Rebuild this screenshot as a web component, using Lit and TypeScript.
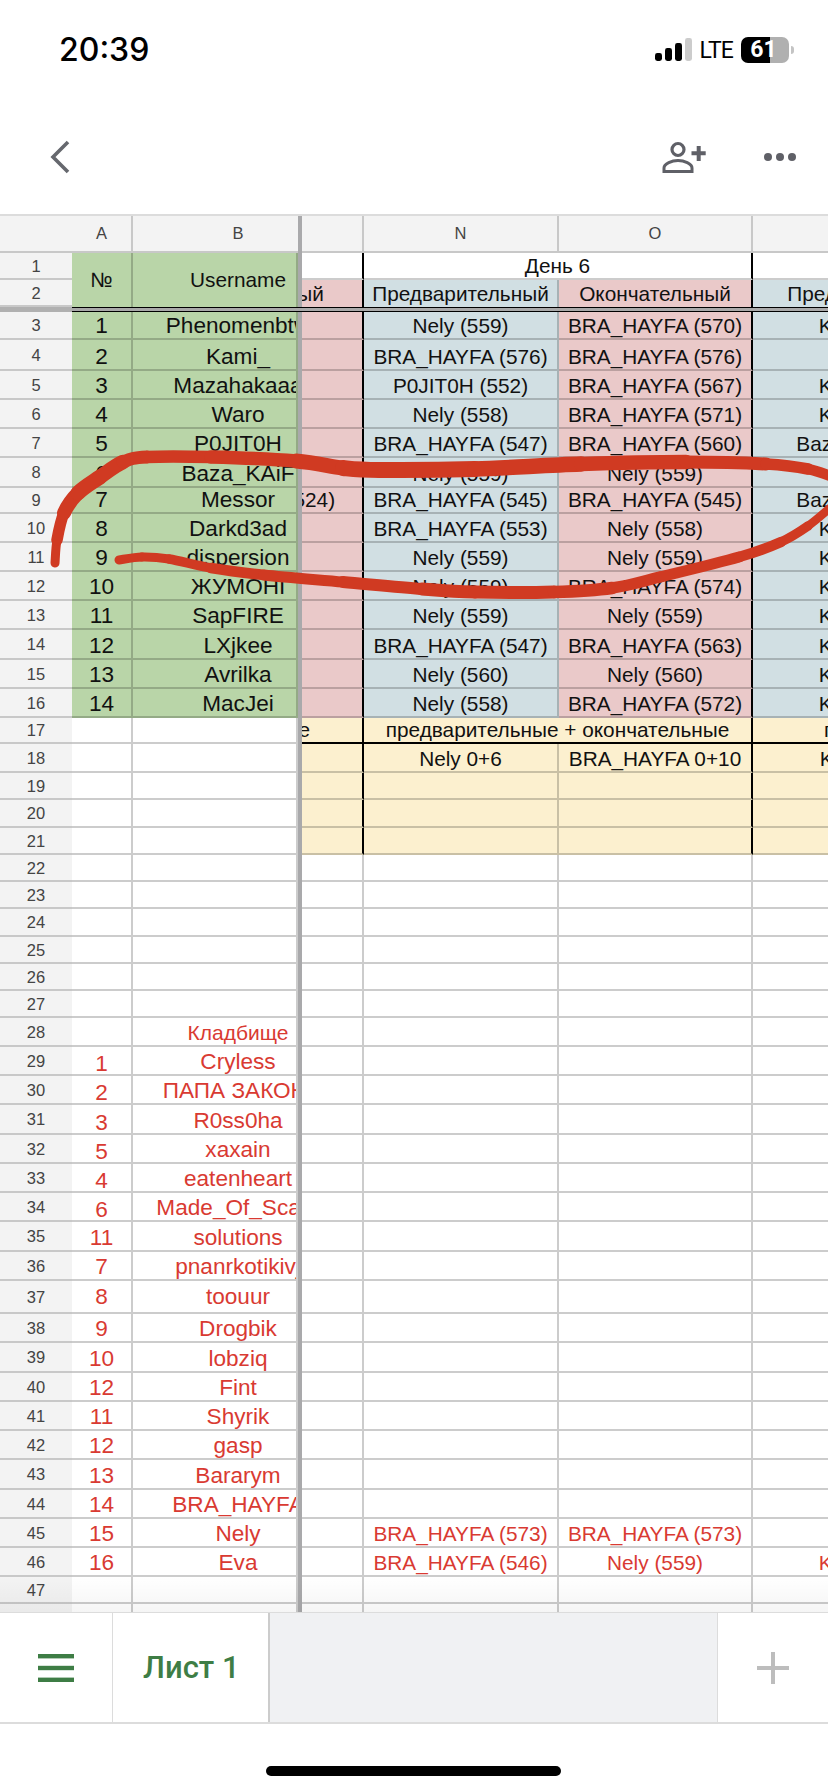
import {css, html, LitElement, svg} from 'lit';
import {customElement} from 'lit/decorators.js';

type Theme = 'player' | 'sum' | 'plain';

interface Row {
  num: number;
  theme: Theme;
  a?: string;
  b?: string;
  m?: string;
  n?: string;
  o?: string;
  p?: string;
}

// bottom edge of each sheet row in page pixels, rows 3 to 48
const ROW_ENDS = [
  340, 371, 400, 429, 458, 488, 514, 543, 572, 601, 630, 660, 689, 718, 744,
  773, 800, 828, 855, 882, 909, 937, 964, 991, 1018, 1047, 1076, 1105, 1135,
  1164, 1193, 1222, 1252, 1281, 1314, 1343, 1373, 1402, 1431, 1460, 1490, 1519,
  1548, 1577, 1604, 1634,
];

const bra = (score: number) => `BRA_HAYFA (${score})`;
const nely = (score: number) => `Nely (${score})`;
const KAMI = 'Kami_ (560)';
const BAZA = 'Baza_KAiF (560)';
const TOTALS = 'предварительные + окончательные';

const PLAYERS: [string, string, string, string][] = [
  ['Phenomenbtw', nely(559), bra(570), KAMI],
  ['Kami_', bra(576), bra(576), ''],
  ['Mazahakaaa', 'P0JIT0H (552)', bra(567), KAMI],
  ['Waro', nely(558), bra(571), KAMI],
  ['P0JIT0H', bra(547), bra(560), BAZA],
  ['Baza_KAiF', nely(559), nely(559), ''],
  ['Messor', bra(545), bra(545), BAZA],
  ['Darkd3ad', bra(553), nely(558), KAMI],
  ['dispersion', nely(559), nely(559), KAMI],
  ['ЖУМОНI', nely(559), bra(574), KAMI],
  ['SapFIRE', nely(559), nely(559), KAMI],
  ['LXjkee', bra(547), bra(563), KAMI],
  ['Avrilka', nely(560), nely(560), KAMI],
  ['MacJei', nely(558), bra(572), KAMI],
];

const GRAVE: [string, string][] = [
  ['1', 'Cryless'],
  ['2', 'ПАПА ЗАКОН\u00a0'],
  ['3', 'R0ss0ha'],
  ['5', 'xaxain'],
  ['4', 'eatenheart'],
  ['6', 'Made_Of_Scars'],
  ['11', 'solutions'],
  ['7', 'pnanrkotikivj'],
  ['8', 'toouur'],
  ['9', 'Drogbik'],
  ['10', 'lobziq'],
  ['12', 'Fint'],
  ['11', 'Shyrik'],
  ['12', 'gasp'],
  ['13', 'Bararym'],
  ['14', 'BRA_HAYFA'],
  ['15', 'Nely'],
  ['16', 'Eva'],
];

function buildRows(): Row[] {
  const rows: Row[] = [];
  for (let num = 3; num <= 48; num++) {
    if (num <= 16) {
      const [b, n, o, p] = PLAYERS[num - 3];
      rows.push({num, theme: 'player', a: String(num - 2), b, n, o, p, m: num === 9 ? bra(524) : ''});
    } else if (num <= 21) {
      const row: Row = {num, theme: 'sum'};
      if (num === 18) Object.assign(row, {n: 'Nely 0+6', o: 'BRA_HAYFA 0+10', p: 'Kami_ 0+12'});
      rows.push(row);
    } else if (num >= 29 && num <= 46) {
      const [a, b] = GRAVE[num - 29];
      rows.push({num, theme: 'plain', a, b});
    } else {
      rows.push({num, theme: 'plain', b: num === 28 ? 'Кладбище' : ''});
    }
  }
  Object.assign(rows[45 - 3], {n: bra(573), o: bra(573)});
  Object.assign(rows[46 - 3], {n: bra(546), o: nely(559), p: KAMI});
  return rows;
}

// marker strokes: x, y, width
const UPPER_STROKE = [
  [55, 563, 8], [57, 540, 10], [64, 513, 13], [78, 493, 15], [100, 477, 15],
  [123, 462, 14], [147, 457, 12], [211, 457, 13], [296, 461, 14], [343, 468, 16],
  [380, 470, 16], [475, 469, 16], [581, 464, 15], [686, 462, 14], [766, 464, 12],
  [808, 469, 11], [836, 478, 10],
];
const LOWER_STROKE = [
  [119, 560, 9], [142, 557, 9], [169, 559, 9], [211, 568, 10], [264, 575, 11],
  [343, 582, 11], [422, 589, 13], [475, 592, 13], [554, 592, 13], [612, 588, 12],
  [660, 577, 11], [739, 557, 11], [781, 542, 10], [808, 526, 9], [830, 508, 8],
];

function strokeSegments(points: number[][]) {
  const out = [];
  const at = (i: number) => points[Math.max(0, Math.min(points.length - 1, i))];
  for (let i = 0; i < points.length - 1; i++) {
    const [p0, p1, p2, p3] = [at(i - 1), at(i), at(i + 1), at(i + 2)];
    const c1x = p1[0] + (p2[0] - p0[0]) / 6;
    const c1y = p1[1] + (p2[1] - p0[1]) / 6;
    const c2x = p2[0] - (p3[0] - p1[0]) / 6;
    const c2y = p2[1] - (p3[1] - p1[1]) / 6;
    out.push(svg`<path d="M${p1[0]} ${p1[1]}C${c1x} ${c1y} ${c2x} ${c2y} ${p2[0]} ${p2[1]}" stroke-width=${(p1[2] + p2[2]) / 2} />`);
  }
  return out;
}

@customElement('app-root')
export class AppRoot extends LitElement {
  private rows = buildRows();

  private cell(text: string | undefined, cls: string) {
    return html`<div class="c ${cls}"><span>${text ?? ''}</span></div>`;
  }

  private clipped(text: string | undefined, cls: string, box: string) {
    return html`<div class="c ${cls}"><span class=${box}>${text ?? ''}</span></div>`;
  }

  private renderRow(r: Row) {
    const red = r.num >= 28 ? 'red' : '';
    const edge = r.num <= 21 ? 'edge' : '';
    const low = r.num >= 29 && r.num <= 34 ? 'low' : '';
    const mid = r.num === 37 ? 'mid' : '';
    const tone = (player: string) =>
      r.theme === 'player' ? player : r.theme === 'sum' ? 'yellow' : '';
    const side = r.theme === 'player' ? 'green' : '';
    return html`
      <div class="rh">${r.num}</div>
      ${this.cell(r.a, `big ${side} ${red} ${low} ${mid}`)}
      ${this.clipped(r.b, `big name-cell ${side} ${red} ${mid} ${r.num === 28 ? 'small' : ''}`, 'name')}
      <div class="freeze-bar"></div>
      ${r.num === 17
        ? html`
            ${this.clipped(TOTALS, 'yellow edge rule end', 'm-total')}
            <div class="c wide yellow edge rule"><span>${TOTALS}</span></div>
            ${this.clipped(TOTALS, 'yellow rule start', 'p-total')}
          `
        : html`
            ${this.clipped(r.m, `${tone('pink')} ${edge}`, 'm-text')}
            ${this.cell(r.n, `${tone('blue')} ${red} ${mid}`)}
            ${this.cell(r.o, `${tone('pink')} ${edge} ${red} ${mid}`)}
            ${this.clipped(r.p, `${tone('blue')} ${red}`, 'p-text')}
          `}
    `;
  }

  override render() {
    const heights = ROW_ENDS.map((end, i) => end - (i === 0 ? 312 : ROW_ENDS[i - 1]));
    const template = `37px 27px 27px 5px ${heights.map((h) => `${h}px`).join(' ')}`;
    return html`
      <header class="status">
        <div class="time">20:39</div>
        <div class="status-right">
          <svg class="signal" width="37" height="23" viewBox="0 0 37 23">
            <rect x="0" y="15" width="7" height="8" rx="2.4" fill="#000" />
            <rect x="10" y="10" width="7" height="13" rx="2.4" fill="#000" />
            <rect x="20" y="5" width="7" height="18" rx="2.4" fill="#000" />
            <rect x="30" y="0" width="7" height="23" rx="2.4" fill="#ccc" />
          </svg>
          <span class="lte">LTE</span>
          <div class="battery">61</div>
          <div class="nub"></div>
        </div>
      </header>

      <nav class="toolbar">
        <svg width="20" height="34" viewBox="0 0 20 34" fill="none" stroke="#66686e" stroke-width="3.6">
          <polyline points="18,2 3,17 18,32" />
        </svg>
        <div class="spacer"></div>
        <svg width="44" height="32" viewBox="0 0 44 32" fill="none" stroke="#5f6067">
          <circle cx="16" cy="8.5" r="6" stroke-width="3.2" />
          <path d="M2 30.5V27C2 22.5 10 19.5 16 19.5S30 22.5 30 27V30.5Z" stroke-width="3" />
          <path d="M29.5 12.3H43.7M36.7 5V20" stroke-width="4" />
        </svg>
        <svg class="dots" width="32" height="8" viewBox="0 0 32 8" fill="#5f6067">
          <circle cx="4" cy="4" r="4" />
          <circle cx="16" cy="4" r="4" />
          <circle cx="28" cy="4" r="4" />
        </svg>
      </nav>

      <section class="sheet">
        <div class="grid" style="grid-template-rows:${template}">
          <div class="rh col-corner"></div>
          <div class="ch">A</div>
          <div class="ch name-head"><span class="name">B</span></div>
          <div class="freeze-bar"></div>
          <div class="ch"></div>
          <div class="ch">N</div>
          <div class="ch">O</div>
          <div class="ch"></div>

          <div class="rh">1</div>
          <div class="c big green merged"><span class="normal">№</span></div>
          <div class="c big green merged name-cell"><span class="name normal">Username</span></div>
          <div class="freeze-bar"></div>
          ${this.cell('', 'edge')}
          <div class="c wide edge"><span>День 6</span></div>
          ${this.cell('', '')}

          <div class="rh">2</div>
          <div class="freeze-bar"></div>
          ${this.clipped('Окончательный', 'pink edge flat', 'm-text')}
          ${this.cell('Предварительный', 'blue flat')}
          ${this.cell('Окончательный', 'pink edge flat')}
          ${this.clipped('Предварительный', 'blue flat', 'p-text')}

          <div class="freeze-head"></div>
          <div class="freeze-line"></div>

          ${this.rows.map((r) => this.renderRow(r))}
        </div>
        <div class="fade"></div>
      </section>

      <footer class="tabs">
        <div class="tab-menu">
          <svg width="36" height="28" viewBox="0 0 36 28" fill="#3e7d45">
            <rect y="0" width="36" height="4.4" />
            <rect y="11.8" width="36" height="4.4" />
            <rect y="23.6" width="36" height="4.4" />
          </svg>
        </div>
        <div class="tab-active">Лист 1</div>
        <div class="tab-rest"></div>
        <div class="tab-add">
          <svg width="32" height="32" viewBox="0 0 32 32" fill="#bdbdbd">
            <rect x="14" y="0" width="4" height="32" />
            <rect x="0" y="14" width="32" height="4" />
          </svg>
        </div>
      </footer>

      <div class="home"><div class="home-bar"></div></div>

      <svg class="marker" viewBox="0 0 828 1792" fill="none" stroke="#d03a22" stroke-linecap="round">
        ${strokeSegments(UPPER_STROKE)} ${strokeSegments(LOWER_STROKE)}
      </svg>
    `;
  }

  static override styles = css`
    :host {
      display: flex;
      flex-direction: column;
      position: relative;
      width: 828px;
      height: 1792px;
      overflow: hidden;
      background: #fff;
      color: #111;
      font-family: 'Liberation Sans', Arial, sans-serif;
    }

    .status {
      height: 99px;
      padding: 0 34px 0 59px;
      display: flex;
      align-items: center;
      justify-content: space-between;
    }

    .time {
      font-family: Inter, sans-serif;
      font-size: 32px;
      font-weight: 500;
      color: #000;
    }

    .status-right {
      display: flex;
      align-items: center;
    }

    .lte {
      margin: 2px 8px 0 8px;
      font-family: Roboto, sans-serif;
      font-size: 23px;
      letter-spacing: -0.9px;
      color: #000;
    }

    .battery {
      width: 48px;
      height: 26px;
      border-radius: 7px;
      background: linear-gradient(90deg, #000 29px, #b0b0b0 29px);
      color: #fff;
      font-family: Roboto, sans-serif;
      font-size: 23px;
      font-weight: 700;
      line-height: 26px;
      text-align: center;
      padding-right: 3px;
      box-sizing: border-box;
    }

    .nub {
      width: 3px;
      height: 8px;
      margin-left: 2px;
      border-radius: 0 3px 3px 0;
      background: #c4c4c4;
    }

    .toolbar {
      height: 115px;
      padding: 0 32px 0 50px;
      display: flex;
      align-items: center;
      box-sizing: border-box;
    }

    .spacer {
      flex: 1;
    }

    .dots {
      margin-left: 58px;
    }

    .sheet {
      position: relative;
      height: 1398px;
      overflow: hidden;
      border-top: 2px solid #dcdcdc;
      box-sizing: border-box;
    }

    .grid {
      display: grid;
      /* the last column runs past the page, so its right rule stays out of view */
      grid-template-columns: 72px 61px 165px 4px 62px 195px 194px 77px;
    }

    .rh,
    .ch {
      min-width: 0;
      overflow: hidden;
      background: #f3f3f3;
      color: #444;
      font-size: 16.5px;
      display: flex;
      align-items: center;
      justify-content: center;
      box-sizing: border-box;
      border-bottom: 2px solid #c8c8c8;
    }

    .rh {
      padding-top: 1px;
    }

    .ch {
      border-right: 2px solid #c8c8c8;
    }

    .name-head {
      justify-content: flex-start;
      border-right: none;
    }

    .c {
      min-width: 0;
      display: flex;
      align-items: flex-end;
      justify-content: center;
      overflow: hidden;
      white-space: nowrap;
      box-sizing: border-box;
      border-right: 2px solid rgba(0, 0, 0, 0.2);
      border-bottom: 2px solid rgba(0, 0, 0, 0.2);
      font-size: 20.8px;
      line-height: 24px;
    }

    .big {
      font-size: 22.6px;
    }

    .small {
      font-size: 21px;
    }

    .low {
      line-height: 20px;
    }

    .mid {
      align-items: center;
    }

    .flat {
      border-bottom: none;
      padding-bottom: 1px;
    }

    .wide {
      grid-column: span 2;
    }

    .merged {
      grid-row: span 2;
      align-items: center;
      border-bottom: none;
    }

    .normal {
      font-size: 20.8px;
    }

    .green {
      background: #b9d5a8;
    }

    .pink {
      background: #eac9c9;
    }

    .blue {
      background: #d1dfe3;
    }

    .yellow {
      background: #fcf0cf;
    }

    .red {
      color: #d93a32;
    }

    .edge {
      border-right-color: #000;
    }

    .rule {
      border-bottom-color: #000;
    }

    .end {
      justify-content: flex-end;
    }

    .start {
      justify-content: flex-start;
    }

    .name-cell {
      justify-content: flex-start;
    }

    .name {
      flex: none;
      width: 210px;
      display: flex;
      justify-content: center;
    }

    .m-text {
      flex: none;
      width: 228px;
      margin-left: -168px;
      display: flex;
      justify-content: center;
    }

    .m-total {
      flex: none;
      padding-right: 52px;
    }

    .p-text {
      flex: none;
      width: 245px;
      margin-right: -170px;
      display: flex;
      justify-content: center;
    }

    .p-total {
      flex: none;
      padding-left: 71px;
    }

    .freeze-bar {
      background: #a9a9ab;
    }

    .freeze-head {
      background: #b0b0b0;
    }

    .freeze-line {
      grid-column: span 7;
      background: #a9a9a9;
      border-top: 1.5px solid #000;
      border-bottom: 1.5px solid #000;
      box-sizing: border-box;
    }

    .fade {
      position: absolute;
      left: 0;
      right: 0;
      bottom: 0;
      height: 36px;
      background: linear-gradient(rgba(0, 0, 0, 0), rgba(0, 0, 0, 0.04));
      pointer-events: none;
    }

    .tabs {
      height: 112px;
      box-sizing: border-box;
      display: flex;
      border-top: 1px solid #dcdcdc;
      border-bottom: 2px solid #dcdcdc;
    }

    .tab-menu {
      width: 113px;
      padding-left: 38px;
      display: flex;
      align-items: center;
      box-sizing: border-box;
      border-right: 1px solid #dcdcdc;
    }

    .tab-active {
      width: 157px;
      padding-left: 30px;
      display: flex;
      align-items: center;
      box-sizing: border-box;
      border-right: 2px solid #ccc;
      color: #3e7d45;
      font-family: Roboto, sans-serif;
      font-size: 31px;
      font-weight: 500;
    }

    .tab-rest {
      flex: 1;
      background: #f0f1f3;
    }

    .tab-add {
      width: 111px;
      padding-left: 39px;
      display: flex;
      align-items: center;
      box-sizing: border-box;
      border-left: 1px solid #dcdcdc;
    }

    .home {
      flex: 1;
      display: flex;
      justify-content: flex-start;
      padding: 42px 0 0 266px;
    }

    .home-bar {
      width: 295px;
      height: 10px;
      border-radius: 5px;
      background: #000;
    }

    .marker {
      position: absolute;
      left: 0;
      top: 0;
      width: 828px;
      height: 1792px;
      pointer-events: none;
    }
  `;
}

declare global {
  interface HTMLElementTagNameMap {
    'app-root': AppRoot;
  }
}
